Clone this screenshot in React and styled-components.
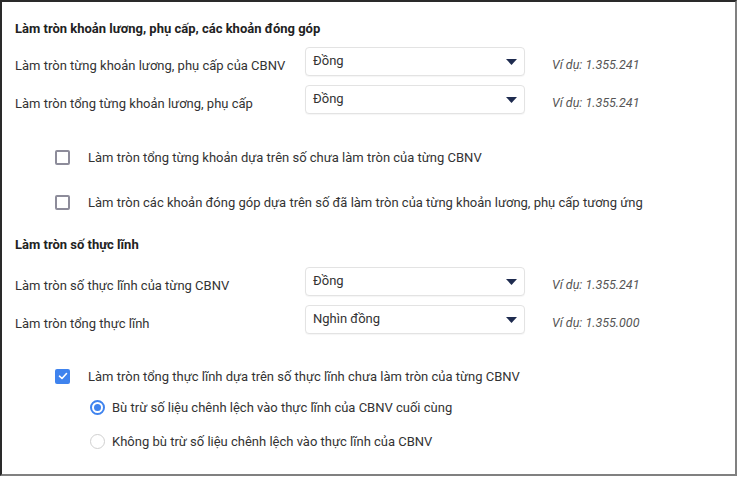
import React from "react";
import styled, { createGlobalStyle } from "styled-components";

const Global = createGlobalStyle`
  html, body { margin: 0; padding: 0; background: #fff; }
  body { font-family: Roboto, "Noto Sans", Arial, sans-serif; color: #333; }
  * { box-sizing: border-box; }
`;

const Frame = styled.div`
  width: 737px;
  height: 476px;
  border-top: 2px solid #2a2a2a;
  border-left: 2px solid #2a2a2a;
  border-right: 2px solid #808080;
  border-bottom: 2px solid #808080;
  padding: 19px 0 0 13px;
  display: flex;
  flex-direction: column;
  overflow: hidden;
`;

const Heading = styled.div`
  font-size: 13px;
  font-weight: 700;
  line-height: 16px;
  height: 16px;
  color: #222;
  margin-top: ${(p) => p.$mt || 0}px;
`;

const Rows = styled.div`
  display: flex;
  flex-direction: column;
  gap: 9px;
  margin-top: ${(p) => p.$mt}px;
`;

const Row = styled.div`
  display: grid;
  grid-template-columns: 290px 220px 1fr;
  align-items: center;
  height: 29px;
`;

const Label = styled.div`
  font-size: 13px;
  color: #333;
  padding-top: 7px;
`;

const Select = styled.div`
  height: 29px;
  border: 1px solid #e3e3e3;
  border-radius: 4px;
  display: flex;
  align-items: center;
  justify-content: space-between;
  padding: 0 7px 0 7px;
  font-size: 13px;
  color: #333;
  background: #fff;
  box-shadow: 0 1px 1px rgba(0, 0, 0, 0.04);
`;

const SelectText = styled.span`
  margin-top: -3px;
`;

const Example = styled.div`
  font-size: 12.5px;
  font-style: italic;
  color: #555;
  padding-left: 27px;
  padding-top: 6px;
`;

const Options = styled.div`
  display: flex;
  flex-direction: column;
  gap: ${(p) => p.$gap}px;
  margin-top: ${(p) => p.$mt}px;
  padding-left: ${(p) => p.$pl}px;
`;

const Option = styled.label`
  display: flex;
  align-items: center;
  height: 20px;
  font-size: 13px;
  color: #333;
  gap: ${(p) => p.$gap}px;
`;

const Box = styled.span`
  width: 15px;
  height: 15px;
  border-radius: 2px;
  flex: none;
  border: ${(p) => (p.$checked ? "none" : "2px solid #8d8c9a")};
  background: ${(p) => (p.$checked ? "#3f83ee" : "#fff")};
  display: flex;
  align-items: center;
  justify-content: center;
`;

const Radio = styled.span`
  width: 15px;
  height: 15px;
  border-radius: 50%;
  flex: none;
  border: ${(p) => (p.$checked ? "2px solid #3f83ee" : "1px solid #d0d0d0")};
  display: flex;
  align-items: center;
  justify-content: center;
  &::after {
    content: "";
    width: 7px;
    height: 7px;
    border-radius: 50%;
    background: ${(p) => (p.$checked ? "#3f83ee" : "transparent")};
  }
`;

const Arrow = () => (
  <svg width="11" height="6" viewBox="0 0 11 6">
    <path d="M0 0 H11 L5.5 6 Z" fill="#1e2b4f" />
  </svg>
);

const Check = () => (
  <svg width="10" height="8" viewBox="0 0 10 8">
    <path d="M1.5 4.2 L4 6.5 L8.5 1.5" stroke="#fff" strokeWidth="1.6" fill="none" strokeLinecap="round" strokeLinejoin="round" />
  </svg>
);

const SettingRow = ({ label, value, example }) => (
  <Row>
    <Label>{label}</Label>
    <Select>
      <SelectText>{value}</SelectText>
      <Arrow />
    </Select>
    <Example>{example}</Example>
  </Row>
);

export default function App() {
  return (
    <>
      <Global />
      <Frame>
        <Heading>Làm tròn khoản lương, phụ cấp, các khoản đóng góp</Heading>
        <Rows $mt={10}>
          <SettingRow label="Làm tròn từng khoản lương, phụ cấp của CBNV" value="Đồng" example="Ví dụ: 1.355.241" />
          <SettingRow label="Làm tròn tổng từng khoản lương, phụ cấp" value="Đồng" example="Ví dụ: 1.355.241" />
        </Rows>
        <Options $mt={33} $gap={25} $pl={40}>
          <Option $gap={18}>
            <Box />
            Làm tròn tổng từng khoản dựa trên số chưa làm tròn của từng CBNV
          </Option>
          <Option $gap={18}>
            <Box />
            Làm tròn các khoản đóng góp dựa trên số đã làm tròn của từng khoản lương, phụ cấp tương ứng
          </Option>
        </Options>
        <Heading $mt={25}>Làm tròn số thực lĩnh</Heading>
        <Rows $mt={14}>
          <SettingRow label="Làm tròn số thực lĩnh của từng CBNV" value="Đồng" example="Ví dụ: 1.355.241" />
          <SettingRow label="Làm tròn tổng thực lĩnh" value="Nghìn đồng" example="Ví dụ: 1.355.000" />
        </Rows>
        <Options $mt={32} $gap={0} $pl={40}>
          <Option $gap={18}>
            <Box $checked>
              <Check />
            </Box>
            Làm tròn tổng thực lĩnh dựa trên số thực lĩnh chưa làm tròn của từng CBNV
          </Option>
        </Options>
        <Options $mt={11} $gap={14} $pl={75}>
          <Option $gap={7}>
            <Radio $checked />
            Bù trừ số liệu chênh lệch vào thực lĩnh của CBNV cuối cùng
          </Option>
          <Option $gap={7}>
            <Radio />
            Không bù trừ số liệu chênh lệch vào thực lĩnh của CBNV
          </Option>
        </Options>
      </Frame>
    </>
  );
}
